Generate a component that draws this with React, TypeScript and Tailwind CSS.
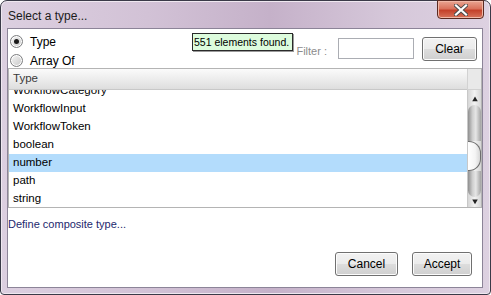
import React from "react";

const ROWS = ["WorkflowCategory", "WorkflowInput", "WorkflowToken", "boolean", "number", "path", "string"];

function Radio({ label, checked }: { label: string; checked?: boolean }) {
  return (
    <div className="flex h-[19px] items-center gap-[7px]">
      <div className="flex h-[13px] w-[13px] items-center justify-center rounded-full border border-[#7d7e80] bg-gradient-to-br from-[#f6f6f6] to-[#c8c8c8] shadow-[inset_0_0_0_1px_#ffffff]">
        {checked && <div className="h-[5px] w-[5px] rounded-full bg-[#1a1a1a]" />}
      </div>
      <span className="text-[12px] leading-none text-black">{label}</span>
    </div>
  );
}

function Button({ label, w }: { label: string; w: string }) {
  return (
    <div
      className={`${w} flex h-[24px] items-center justify-center rounded-[3px] border border-[#707070] bg-[linear-gradient(#f2f2f2_0%,#ebebeb_50%,#dddddd_51%,#cfcfcf_100%)] text-[12px] text-black shadow-[inset_0_0_0_1px_#fcfcfc]`}
    >
      {label}
    </div>
  );
}

export default function App() {
  return (
    <div className="h-[295px] w-[491px] bg-white font-['Liberation_Sans',Arial,sans-serif]">
      <div className="flex h-full w-full flex-col rounded-t-[7px] rounded-b-[4px] border border-[#3a3a48] bg-[linear-gradient(90deg,#dccfe0_0%,#d2c2d6_30%,#c5b1c9_55%,#d6c8da_80%,#ddd1e1_100%)] shadow-[inset_0_0_0_1px_#efe8f0]">
        {/* title bar */}
        <div className="flex h-[27px] items-start justify-between pl-[7px] pr-[6px]">
          <span className="pt-[9px] text-[12px] leading-none text-[#1b1b1b]">Select a type...</span>
          <div className="flex h-[19px] w-[47px] -mt-px items-center justify-center rounded-b-[4px] border border-[#5a2a22] bg-[linear-gradient(#e9a592_0%,#d9725c_45%,#c4412a_55%,#d8735b_100%)] shadow-[inset_0_0_0_1px_#f0b7a6]">
            <svg width="14" height="12" viewBox="0 0 14 12">
              <path d="M2 1.5 L12 10.5 M12 1.5 L2 10.5" stroke="#4a4a4a" strokeWidth="4" strokeLinecap="square" />
              <path d="M2 1.5 L12 10.5 M12 1.5 L2 10.5" stroke="#ffffff" strokeWidth="2.2" strokeLinecap="square" />
            </svg>
          </div>
        </div>

        {/* client area */}
        <div className="mb-[6px] ml-[6px] mr-[7px] flex flex-1 flex-col border border-[#8c8498] bg-white">
          {/* top controls */}
          <div className="relative flex h-[39px] items-start">
            <div className="ml-[2px] mt-[3px] flex flex-col">
              <Radio label="Type" checked />
              <Radio label="Array Of" />
            </div>
            <div className="absolute left-[184px] top-[4px] flex h-[18px] w-[101px] items-center border border-[#2a2a2a] bg-[#ddfcdd] pl-[1px] text-[10.5px] leading-none text-black shadow-[1px_1px_0_#9a9a9a]">
              551 elements found.
            </div>
            <div className="ml-auto mt-[8px] flex items-start">
              <span className="mt-[9px] text-[11px] leading-none text-[#8c8c8c]">Filter :</span>
              <div className="ml-[11px] mt-px h-[21px] w-[76px] border border-[#abadb3] bg-white" />
              <div className="ml-[8px]">
                <Button label="Clear" w="w-[55px]" />
              </div>
            </div>
            <div className="w-[5px]" />
          </div>

          {/* table */}
          <div className="flex h-[140px] flex-col border border-[#b4b4b4]">
            <div className="flex h-[21px]">
              <div className="flex flex-1 items-center border-b border-[#c8c8c8] bg-[linear-gradient(#fbfbfb,#dedede)] pl-[4px] text-[11.5px] text-[#3a3a3a]">
                Type
              </div>
              <div className="w-[14px] border-b border-l border-[#d2d2d2] bg-[#e9e9e9]" />
            </div>
            <div className="flex flex-1 overflow-hidden">
              <div className="flex-1 overflow-hidden">
                <div className="-mt-[8px]">
                  {ROWS.map((r) => (
                    <div
                      key={r}
                      className={`flex h-[18px] items-center pl-[4px] text-[11.5px] text-black ${r === "number" ? "bg-[#b3dcfc]" : ""}`}
                    >
                      {r}
                    </div>
                  ))}
                </div>
              </div>
              {/* scrollbar */}
              <div className="flex w-[14px] flex-col items-center border-l border-[#c8c8c8] bg-[linear-gradient(90deg,#d6d6d6,#f2f2f2_50%,#d6d6d6)]">
                <svg width="8" height="12" viewBox="0 0 8 12" className="mt-[4px]">
                  <path d="M4 3 L7.5 9 L0.5 9 Z" fill="#222" />
                </svg>
                <div className="mt-[1px] flex w-full flex-1 flex-col">
                  <div className="h-[36px] rounded-t-[7px] bg-[linear-gradient(90deg,#8f8f8f,#cfcfcf_35%,#e6e6e6_60%,#a3a3a3)]" />
                  <div className="h-[30px] rounded-r-[12px] border border-l-0 border-[#6e6e6e] bg-[linear-gradient(90deg,#ffffff,#f4f4f4_60%,#d8d8d8)]" />
                  <div className="h-[26px] rounded-b-[7px] bg-[linear-gradient(90deg,#8f8f8f,#cfcfcf_35%,#e6e6e6_60%,#a3a3a3)]" />
                </div>
                <svg width="8" height="12" viewBox="0 0 8 12" className="mb-[1px]">
                  <path d="M0.5 3 L7.5 3 L4 9 Z" fill="#222" />
                </svg>
              </div>
            </div>
          </div>

          <div className="mt-[11px] text-[11px] leading-none text-[#23286e]">Define composite type...</div>

          <div className="mt-auto mb-[11px] mr-[10px] flex justify-end gap-[14px]">
            <Button label="Cancel" w="w-[63px]" />
            <Button label="Accept" w="w-[60px]" />
          </div>
        </div>
      </div>
    </div>
  );
}
